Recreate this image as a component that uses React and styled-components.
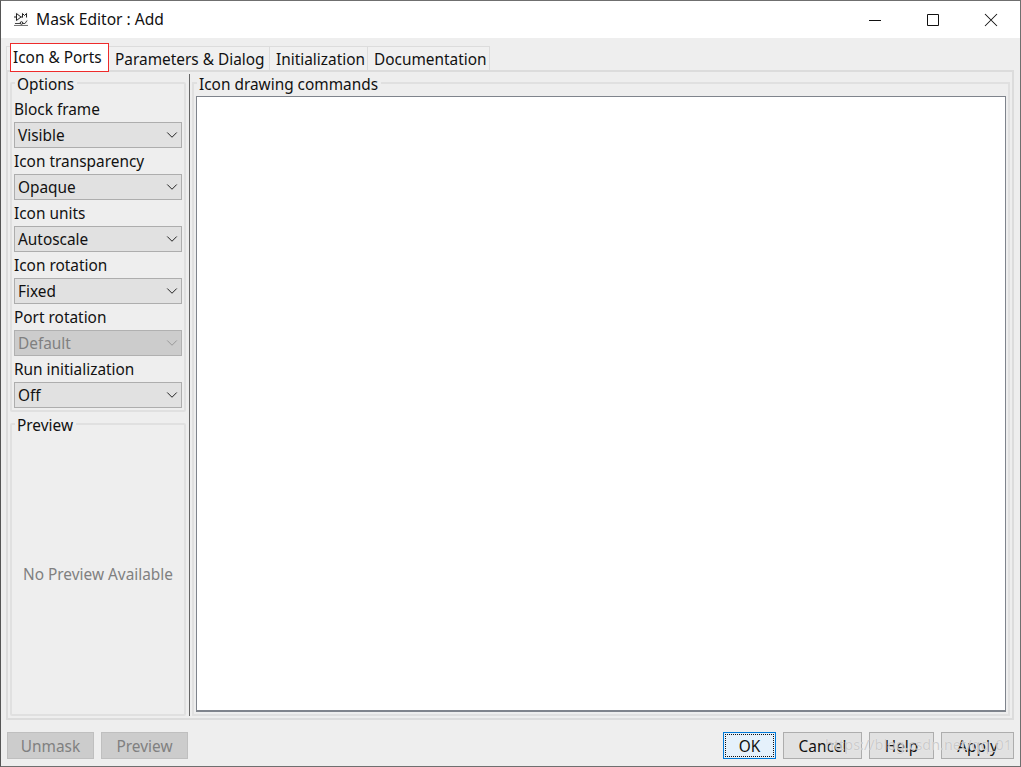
import React from 'react';
import styled, { createGlobalStyle } from 'styled-components';
import { ChevronDown } from 'lucide-react';

const FONT = '"Noto Sans", "Open Sans", sans-serif';

const GlobalStyle = createGlobalStyle`
  html, body { margin: 0; padding: 0; background: #eeeeee; }
  * { box-sizing: border-box; }
`;

const S = {
  Window: styled.div`
    display: flex;
    flex-direction: column;
    width: 1021px;
    height: 767px;
    border: 1px solid #6f6f6f;
    border-left-color: #555;
    background: #eeeeee;
    font-family: ${FONT};
    font-size: 15.4px;
    color: #111;
  `,
  TitleBar: styled.div`
    display: flex;
    align-items: center;
    height: 37px;
    padding-left: 12px;
    background: #fff;
  `,
  Title: styled.span`
    margin: 0 0 1px 7px;
    font-size: 15.6px;
  `,
  Controls: styled.div`
    display: flex;
    margin-left: auto;
  `,
  Control: styled.span`
    display: flex;
    align-items: center;
    justify-content: center;
    width: 58px;
    height: 37px;
  `,
  Tabs: styled.div`
    display: flex;
    align-items: flex-end;
    height: 32px;
    padding-left: 5px;
  `,
  Tab: styled.div`
    position: relative;
    display: flex;
    align-items: center;
    flex: none;
    width: ${p => p.$w}px;
    height: 24px;
    padding: 2px 0 0 6px;
    background: #f0f0f0;
    border-top: 1px solid #dcdcdc;
    border-right: 1px solid #dcdcdc;
    border-left: ${p => (p.$first ? '1px solid #dcdcdc' : 'none')};
    white-space: nowrap;
  `,
  Highlight: styled.span`
    position: absolute;
    left: 3px;
    top: -4px;
    display: flex;
    align-items: center;
    width: 99px;
    height: 29px;
    padding: 0 0 1px 2px;
    background: #fff;
    border: 1px solid #ee2b2b;
  `,
  Pane: styled.div`
    display: flex;
    gap: 3px;
    height: 650px;
    margin: 0 6px 0 5px;
    padding: 2px;
    border: 2px solid #dcdcdc;
  `,
  Side: styled.div`
    display: flex;
    flex-direction: column;
    gap: 3px;
    width: 176px;
    flex: none;
  `,
  Group: styled.fieldset`
    display: flex;
    flex-direction: column;
    flex: ${p => (p.$grow ? 1 : 'none')};
    min-width: 0;
    margin: 0;
    padding: ${p => (p.$grow ? '0 2px 2px' : '4px 2px 2px')};
    border: 2px solid #e0e0e0;
    border-radius: 2px;
  `,
  Legend: styled.legend`
    height: 18px;
    margin-left: 1px;
    padding: 0 3px 0 2px;
    line-height: 22px;
  `,
  Label: styled.div`
    height: 26px;
    line-height: 28px;
  `,
  Select: styled.div`
    display: flex;
    align-items: center;
    justify-content: space-between;
    height: 26px;
    padding-left: 3px;
    background: ${p => (p.$disabled ? '#cccccc' : '#e1e1e1')};
    border: 1px solid ${p => (p.$disabled ? '#b0b0b0' : '#adadad')};
    color: ${p => (p.$disabled ? '#808080' : '#111')};
  `,
  Empty: styled.div`
    flex: 1;
    display: flex;
    align-items: center;
    justify-content: center;
    padding-top: 3px;
    color: #808080;
  `,
  Main: styled.div`
    flex: 1;
    display: flex;
    min-width: 0;
    padding-left: 2px;
    border-left: 1px solid #666;
  `,
  Commands: styled.fieldset`
    flex: 1;
    display: flex;
    min-width: 0;
    margin: 0;
    padding: 4px 2px 2px;
    border: 2px solid #e0e0e0;
  `,
  Editor: styled.div`
    flex: 1;
    background: #fff;
    border: 1px solid #7f848c;
    border-bottom-width: 2px;
  `,
  Footer: styled.div`
    position: relative;
    flex: 1;
    display: flex;
    align-items: flex-start;
    padding: 12px 6px 0;
  `,
  Buttons: styled.div`
    display: flex;
    gap: 7px;
    margin-left: ${p => (p.$right ? 'auto' : '0')};
  `,
  Button: styled.div`
    display: flex;
    align-items: center;
    justify-content: center;
    width: ${p => p.$w}px;
    height: 27px;
    padding-top: 2px;
    background: #e1e1e1;
    border: 1px solid #adadad;
    ${p => p.$disabled && 'background: #cccccc; border-color: #bfbfbf; color: #808080;'}
    ${p => p.$focus && 'background: #e5f1fb; border-color: #0078d7; outline: 1px dotted #111; outline-offset: -3px;'}
  `,
  Watermark: styled.span`
    position: absolute;
    left: 824px;
    top: 15px;
    font-size: 14.4px;
    color: rgba(195, 195, 195, 0.85);
    text-shadow: 0 0 1px rgba(255, 255, 255, 0.8);
    white-space: nowrap;
  `,
};

const options = [
  ['Block frame', 'Visible'],
  ['Icon transparency', 'Opaque'],
  ['Icon units', 'Autoscale'],
  ['Icon rotation', 'Fixed'],
  ['Port rotation', 'Default', true],
  ['Run initialization', 'Off'],
];

const AppIcon = () => (
  <svg width="16" height="16" viewBox="0 0 16 16" fill="none">
    <path d="M1 0h14v13H1z" fill="#f8f8f8" />
    <path d="M1 13.5h14" stroke="#777" />
    <path d="M3.5 1.5v7l4.5-3.5zM1 5h2.5M8 5h1.5M9.5 5.5v-4l2 2 2-2v4" stroke="#222" />
    <path d="M2 11.5h5M10 11.5h2l2-3" stroke="#444" />
    <circle cx="8.5" cy="11" r="1.3" stroke="#222" />
  </svg>
);

const MinimizeGlyph = () => (
  <svg width="14" height="14" viewBox="0 0 14 14"><path d="M1 7.5h12" stroke="#111" /></svg>
);

const MaximizeGlyph = () => (
  <svg width="14" height="14" viewBox="0 0 14 14"><path d="M1.5 1.5h11v11h-11z" fill="none" stroke="#111" /></svg>
);

const CloseGlyph = () => (
  <svg width="14" height="14" viewBox="0 0 14 14"><path d="M1 1l12 12M13 1L1 13" stroke="#111" strokeWidth="1.05" /></svg>
);

export default function App() {
  return (
    <S.Window>
      <GlobalStyle />
      <S.TitleBar>
        <AppIcon />
        <S.Title>Mask Editor : Add</S.Title>
        <S.Controls>
          <S.Control><MinimizeGlyph /></S.Control>
          <S.Control><MaximizeGlyph /></S.Control>
          <S.Control><CloseGlyph /></S.Control>
        </S.Controls>
      </S.TitleBar>
      <S.Tabs>
        <S.Tab $first $w={103}>
          <S.Highlight>Icon &amp; Ports</S.Highlight>
        </S.Tab>
        <S.Tab $w={161}>Parameters &amp; Dialog</S.Tab>
        <S.Tab $w={98}>Initialization</S.Tab>
        <S.Tab $w={122}>Documentation</S.Tab>
      </S.Tabs>
      <S.Pane>
        <S.Side>
          <S.Group>
            <S.Legend>Options</S.Legend>
            {options.map(([label, value, disabled]) => (
              <div key={label}>
                <S.Label>{label}</S.Label>
                <S.Select $disabled={disabled}>
                  {value}
                  <ChevronDown size={18} strokeWidth={1} absoluteStrokeWidth color={disabled ? '#999' : '#222'} />
                </S.Select>
              </div>
            ))}
          </S.Group>
          <S.Group $grow>
            <S.Legend>Preview</S.Legend>
            <S.Empty>No Preview Available</S.Empty>
          </S.Group>
        </S.Side>
        <S.Main>
          <S.Commands>
            <S.Legend>Icon drawing commands</S.Legend>
            <S.Editor />
          </S.Commands>
        </S.Main>
      </S.Pane>
      <S.Footer>
        <S.Buttons>
          <S.Button $w={87} $disabled>Unmask</S.Button>
          <S.Button $w={87} $disabled>Preview</S.Button>
        </S.Buttons>
        <S.Buttons $right>
          <S.Button $w={53} $focus>OK</S.Button>
          <S.Button $w={79}>Cancel</S.Button>
          <S.Button $w={65}>Help</S.Button>
          <S.Button $w={73}>Apply</S.Button>
        </S.Buttons>
        <S.Watermark>https://blog.csdn.net/qq_01</S.Watermark>
      </S.Footer>
    </S.Window>
  );
}
